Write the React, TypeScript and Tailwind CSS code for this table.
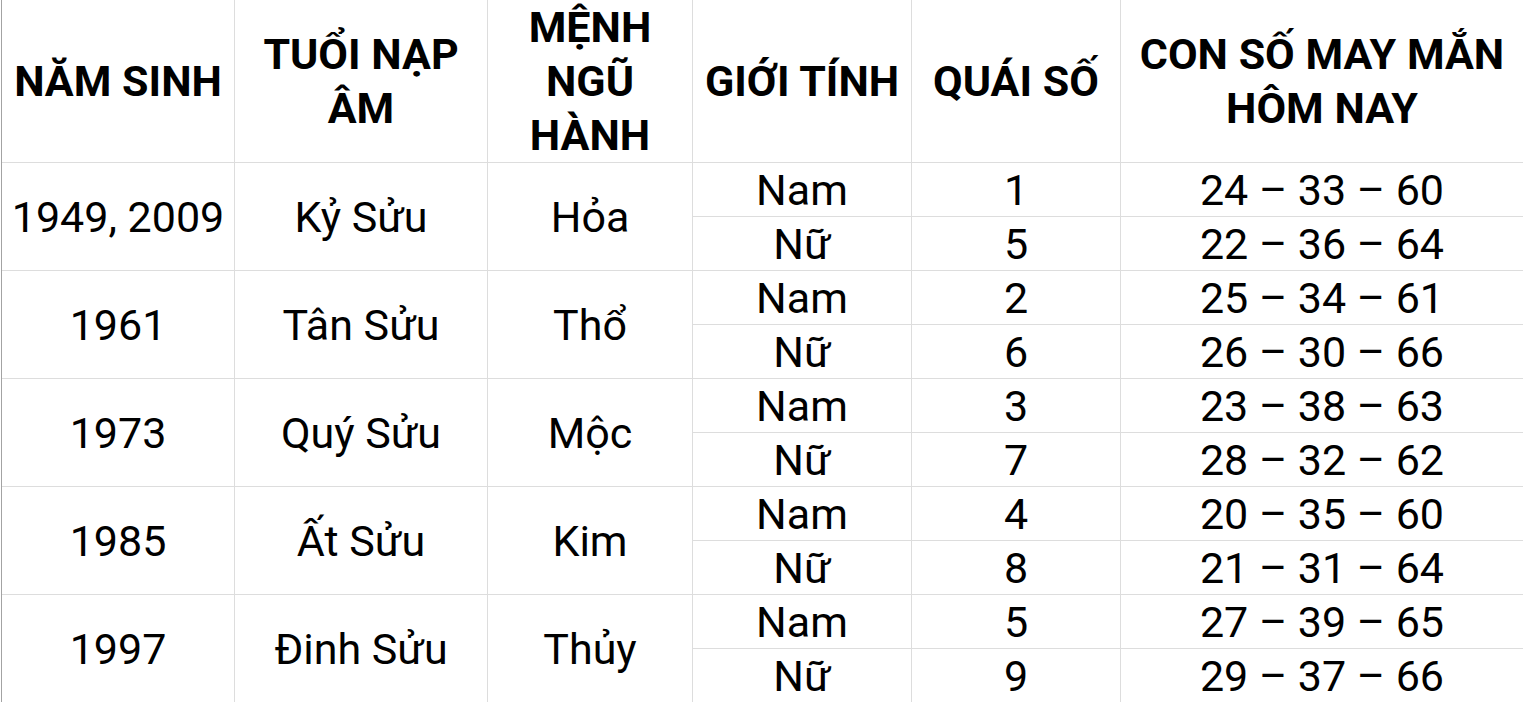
import React from "react";

const rows = [
  { year: "1949, 2009", tuoi: "Kỷ Sửu", menh: "Hỏa", a: ["1", "24 – 33 – 60"], b: ["5", "22 – 36 – 64"] },
  { year: "1961", tuoi: "Tân Sửu", menh: "Thổ", a: ["2", "25 – 34 – 61"], b: ["6", "26 – 30 – 66"] },
  { year: "1973", tuoi: "Quý Sửu", menh: "Mộc", a: ["3", "23 – 38 – 63"], b: ["7", "28 – 32 – 62"] },
  { year: "1985", tuoi: "Ất Sửu", menh: "Kim", a: ["4", "20 – 35 – 60"], b: ["8", "21 – 31 – 64"] },
  { year: "1997", tuoi: "Đinh Sửu", menh: "Thủy", a: ["5", "27 – 39 – 65"], b: ["9", "29 – 37 – 66"] },
];

const cell =
  "flex items-center justify-center text-center border-r border-b border-[#dddddd] whitespace-nowrap";

export default function App() {
  return (
    <div
      className="w-[1523px] h-[702px] overflow-hidden bg-white pl-px text-black"
      style={{ fontFamily: "Roboto, 'Noto Sans', sans-serif" }}
    >
      <div className="grid grid-cols-[233px_253px_205px_219px_209px_1fr] grid-rows-[163px_repeat(10,54px)] border-l border-[#a3a3a3] text-[43px] leading-[54px]">
        <div className={`${cell} font-bold`}>NĂM SINH</div>
        <div className={`${cell} font-bold`}>
          TUỔI NẠP
          <br />
          ÂM
        </div>
        <div className={`${cell} font-bold`}>
          MỆNH
          <br />
          NGŨ
          <br />
          HÀNH
        </div>
        <div className={`${cell} font-bold`}>GIỚI TÍNH</div>
        <div className={`${cell} font-bold`}>QUÁI SỐ</div>
        <div className={`${cell} font-bold border-r-0`}>
          CON SỐ MAY MẮN
          <br />
          HÔM NAY
        </div>
        {rows.map((r) => (
          <React.Fragment key={r.year}>
            <div className={`${cell} row-span-2`}>{r.year}</div>
            <div className={`${cell} row-span-2`}>{r.tuoi}</div>
            <div className={`${cell} row-span-2`}>{r.menh}</div>
            <div className={cell}>Nam</div>
            <div className={cell}>{r.a[0]}</div>
            <div className={`${cell} border-r-0`}>{r.a[1]}</div>
            <div className={cell}>Nữ</div>
            <div className={cell}>{r.b[0]}</div>
            <div className={`${cell} border-r-0`}>{r.b[1]}</div>
          </React.Fragment>
        ))}
      </div>
    </div>
  );
}
